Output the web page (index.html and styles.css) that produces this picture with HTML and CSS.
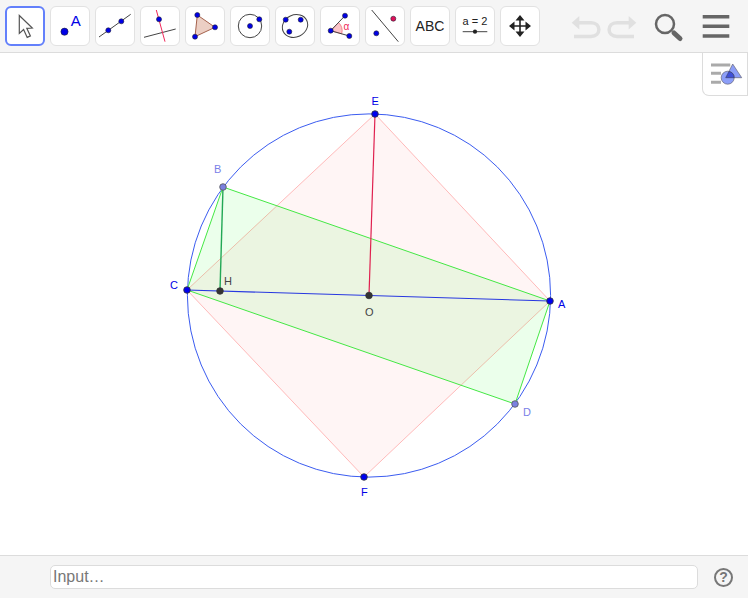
FILE: index.html
```html
<!DOCTYPE html>
<html lang="en">
<head>
  <meta charset="UTF-8" />
  <title>Circle construction</title>
  <link rel="stylesheet" href="styles.css">
</head>
<body>
  <header class="toolbar">
    <div class="tools">
      <!-- Move -->
      <button class="tool selected">
        <svg viewBox="0 0 40 40"><path class="cursor" d="M14.3 9.5 V27.5 L18.6 23.6 L22.2 31.4 L25.4 29.9 L21.8 22.3 L27.3 22 Z"/></svg>
      </button>
      <!-- Point -->
      <button class="tool">
        <svg viewBox="0 0 40 40"><circle class="dot" cx="14.5" cy="25.7" r="3.6"/><text class="icon-label blue" x="25.7" y="19.8" font-size="15">A</text></svg>
      </button>
      <!-- Line -->
      <button class="tool">
        <svg viewBox="0 0 40 40"><line class="ink" x1="4" y1="31" x2="35.7" y2="8.3"/><circle class="dot" cx="13.3" cy="24.3" r="2.5"/><circle class="dot" cx="26.3" cy="15.3" r="2.5"/></svg>
      </button>
      <!-- Perpendicular -->
      <button class="tool">
        <svg viewBox="0 0 40 40"><line class="ink" x1="4" y1="31.3" x2="35.7" y2="23"/><line class="ink red" x1="16.3" y1="4" x2="25" y2="35.7"/><circle class="dot" cx="19" cy="13.3" r="2.5"/></svg>
      </button>
      <!-- Polygon -->
      <button class="tool">
        <svg viewBox="0 0 40 40"><polygon class="poly" points="12.3,9 30,21.3 10,30.7"/><circle class="dot" cx="12.3" cy="9" r="2.5"/><circle class="dot" cx="30" cy="21.3" r="2.5"/><circle class="dot" cx="10" cy="30.7" r="2.5"/></svg>
      </button>
      <!-- Circle -->
      <button class="tool">
        <svg viewBox="0 0 40 40"><circle class="ink" cx="20" cy="20" r="11.7"/><circle class="dot" cx="20" cy="20" r="2.5"/><circle class="dot" cx="29.3" cy="13.3" r="2.5"/></svg>
      </button>
      <!-- Conic -->
      <button class="tool">
        <svg viewBox="0 0 40 40"><ellipse class="ink" cx="20" cy="20" rx="13" ry="11" transform="rotate(-25 20 20)"/><circle class="dot" cx="10.7" cy="13.7" r="2.5"/><circle class="dot" cx="25.7" cy="13.7" r="2.5"/><circle class="dot" cx="14.3" cy="25.7" r="2.5"/></svg>
      </button>
      <!-- Angle -->
      <button class="tool">
        <svg viewBox="0 0 40 40"><path class="wedge" d="M10.7 24.7 L18.5 16.5 A11.5 11.5 0 0 1 21.7 27.8 Z"/><line class="ink" x1="10.7" y1="24.7" x2="25" y2="9.7"/><line class="ink" x1="10.7" y1="24.7" x2="29.3" y2="30"/><circle class="dot" cx="10.7" cy="24.7" r="2.5"/><circle class="dot" cx="25" cy="9.7" r="2.5"/><circle class="dot" cx="29.3" cy="30" r="2.5"/><text class="icon-label red-text" x="26.3" y="23.500" font-size="10">α</text></svg>
      </button>
      <!-- Reflect -->
      <button class="tool">
        <svg viewBox="0 0 40 40"><line class="ink" x1="6.7" y1="4" x2="33.3" y2="35.7"/><circle class="dot" cx="11.3" cy="27.3" r="2.5"/><circle class="dot red-dot" cx="28.3" cy="12.7" r="2.5"/></svg>
      </button>
      <!-- Text -->
      <button class="tool">
        <svg viewBox="0 0 40 40"><text class="icon-label" x="20" y="25" font-size="14">ABC</text></svg>
      </button>
      <!-- Slider -->
      <button class="tool">
        <svg viewBox="0 0 40 40"><text class="icon-label" x="20" y="19" font-size="11">a = 2</text><line class="ink" x1="7.7" y1="25.7" x2="32.3" y2="25.7"/><circle class="knob" cx="20" cy="25.7" r="2.1"/></svg>
      </button>
      <!-- Move view -->
      <button class="tool">
        <svg viewBox="0 0 40 40"><path class="ink thick" d="M20 12 V28 M12 20 H28"/><path class="knob" d="M20 9 L24.5 14.500 H15.500 Z M20 31 L24.5 25.500 H15.500 Z M9 20 L14.500 15.500 V24.500 Z M31 20 L25.500 15.500 V24.500 Z"/></svg>
      </button>
    </div>

    <div class="actions">
      <svg class="action" viewBox="0 0 36 40"><path class="history" d="M9 16.7 H23 C33.5 16.7 33.5 30.5 23 30.5 H6"/><path class="history-head" d="M3.7 16.7 L11.3 10 V23.6 Z"/></svg>
      <svg class="action" viewBox="0 0 36 40"><path class="history" d="M27 16.7 H13 C2.5 16.7 2.5 30.5 13 30.5 H30"/><path class="history-head" d="M32.3 16.7 L24.7 10 V23.6 Z"/></svg>
      <svg class="action search" viewBox="0 0 36 40"><circle class="lens" cx="15" cy="18" r="9"/><line class="lens-handle" x1="24" y1="27" x2="30" y2="32.5"/></svg>
      <svg class="action menu" viewBox="0 0 36 40"><path class="menu-lines" d="M4.7 10.7 H31.3 M4.7 20.3 H31.3 M4.7 30 H31.3"/></svg>
    </div>
  </header>

  <main class="canvas">
    <svg class="construction" viewBox="0 0 748 502">
      <g transform="translate(0 -53)">
        <circle class="circle" cx="369" cy="295.5" r="181.6"/>
        <polygon class="square" points="187,290 375,114 550,301 364,477"/>
        <polygon class="rect" points="223,187 550,301 515,404 187,290"/>
        <line class="seg-blue" x1="187" y1="290" x2="550" y2="301"/>
        <line class="seg-red" x1="375" y1="114" x2="369" y2="295.5"/>
        <line class="seg-green" x1="223" y1="187" x2="220" y2="291"/>

        <circle class="pt free" cx="550" cy="301" r="3.300"/>
        <circle class="pt free" cx="187" cy="290" r="3.300"/>
        <circle class="pt free" cx="375" cy="114" r="3.300"/>
        <circle class="pt free" cx="364" cy="477" r="3.300"/>
        <circle class="pt soft" cx="223" cy="187" r="3.300"/>
        <circle class="pt soft" cx="515" cy="404" r="3.300"/>
        <circle class="pt dark" cx="369" cy="295.5" r="3.300"/>
        <circle class="pt dark" cx="220" cy="291" r="3.300"/>

        <text class="label blue" x="558" y="308">A</text>
        <text class="label soft-text" x="214" y="173">B</text>
        <text class="label blue" x="170" y="289">C</text>
        <text class="label soft-text" x="523" y="416">D</text>
        <text class="label blue" x="371.500" y="105">E</text>
        <text class="label blue" x="361" y="496">F</text>
        <text class="label dark-text" x="224" y="285">H</text>
        <text class="label dark-text" x="365" y="316">O</text>
      </g>
    </svg>

    <button class="style-toggle">
      <svg viewBox="0 0 46 43">
        <path class="style-lines" d="M9 12 H28.300 M9 20.300 H19 M9 29.300 H19"/>
        <polygon class="style-shape" points="30.700,11 39.700,24.700 23.700,24.700"/>
        <circle class="style-shape" cx="25.700" cy="24.700" r="6.500"/>
        <path class="style-overlap" d="M26.900 18.500 A6.500 6.500 0 0 1 32.200 24.700 H23.700 Z"/>
      </svg>
    </button>
  </main>

  <footer class="input-bar">
    <div class="input-box">Input…</div>
    <div class="help">?</div>
  </footer>
</body>
</html>
```

FILE: styles.css
```css
* {
  margin: 0;
  padding: 0;
  box-sizing: border-box;
}

html, body {
  height: 100%;
  overflow: hidden;
  background-color: #fff;
  font-family: "Liberation Sans", Arial, sans-serif;
}

body {
  display: flex;
  flex-direction: column;
  padding: 0 2px 2px 0;
}

/* Toolbar */
.toolbar {
  display: flex;
  align-items: center;
  height: 53px;
  padding: 0 14px 1px 5px;
  background-color: #f5f5f5;
  border-bottom: 1px solid #dcdcdc;
}

.tools {
  display: flex;
  gap: 5px;
}

.tool {
  width: 40px;
  height: 40px;
  background-color: #fff;
  border: 1px solid #e2e2e2;
  border-radius: 6px;
}

.tool.selected {
  border: 2px solid #6380fb;
}

.tool svg {
  display: block;
  width: 40px;
  height: 40px;
  margin: -1px;
}

.tool.selected svg {
  margin: -2px;
}

.actions {
  display: flex;
  margin-left: auto;
}

.action {
  display: block;
  width: 36px;
  height: 40px;
}

.search {
  margin-left: 10px;
}

.menu {
  margin-left: 12px;
}

.history {
  fill: none;
  stroke: #e0e0e0;
  stroke-width: 3.5;
}

.history-head {
  fill: #e0e0e0;
}

.lens {
  fill: none;
  stroke: #666;
  stroke-width: 2.5;
}

.lens-handle {
  stroke: #666;
  stroke-width: 5;
  stroke-linecap: round;
}

.menu-lines {
  fill: none;
  stroke: #666;
  stroke-width: 3.5;
}

/* Tool icons */
.cursor {
  fill: #fff;
  stroke: #555;
  stroke-width: 1.2;
}

.ink {
  fill: none;
  stroke: #444;
  stroke-width: 1;
}

.ink.red {
  stroke: #f0285a;
}

.ink.thick {
  stroke-width: 1.6;
  stroke: #222;
}

.dot {
  fill: #0000e6;
  stroke: #223;
  stroke-width: 0.6;
}

.dot.red-dot {
  fill: #e0105a;
}

.knob {
  fill: #222;
}

.poly {
  fill: #eccfc4;
  stroke: #a5624d;
  stroke-width: 1;
}

.wedge {
  fill: #fcc4c8;
  stroke: #f0707a;
  stroke-width: 0.8;
}

.icon-label {
  fill: #222;
  text-anchor: middle;
}

.icon-label.blue {
  fill: #0000e6;
}

.icon-label.red-text {
  fill: #f0285a;
}

/* Drawing area */
.canvas {
  position: relative;
  flex: 1;
}

.construction {
  display: block;
  width: 748px;
  height: 502px;
}

.circle {
  fill: none;
  stroke: #3b5cf0;
  stroke-width: 1;
}

.square {
  fill: rgba(255, 0, 0, 0.04);
  stroke: #ffa8a8;
  stroke-width: 0.8;
}

.rect {
  fill: rgba(0, 255, 0, 0.08);
  stroke: #44e844;
  stroke-width: 1;
}

.seg-blue {
  stroke: #2838e0;
  stroke-width: 1.1;
}

.seg-red {
  stroke: #e0204f;
  stroke-width: 1.2;
}

.seg-green {
  stroke: #22a855;
  stroke-width: 1.4;
}

.pt {
  stroke: #333;
  stroke-width: 0.8;
}

.pt.free {
  fill: #0000f0;
}

.pt.soft {
  fill: #7a80e0;
  stroke: #555;
}

.pt.dark {
  fill: #333;
}

.label {
  font-size: 11px;
}

.label.blue {
  fill: #0000e6;
}

.soft-text {
  fill: #7a80e8;
}

.dark-text {
  fill: #444;
}

.style-toggle {
  position: absolute;
  top: 0;
  right: 0;
  width: 46px;
  height: 43px;
  background-color: #fff;
  border: 1px solid #dcdcdc;
  border-top: none;
  border-radius: 0 0 0 7px;
}

.style-toggle svg {
  display: block;
  width: 46px;
  height: 43px;
  margin-left: -1px;
}

.style-lines {
  fill: none;
  stroke: #aaa;
  stroke-width: 3;
}

.style-shape {
  fill: #8c9ef8;
  stroke: #667;
  stroke-width: 0.7;
}

.style-overlap {
  fill: #3f50d8;
  stroke: #334;
  stroke-width: 0.5;
}

/* Input bar */
.input-bar {
  display: flex;
  align-items: center;
  height: 43px;
  padding: 0 15px 0 50px;
  background-color: #f5f5f5;
  border-top: 1px solid #dcdcdc;
}

.input-box {
  flex: 1;
  height: 24px;
  padding-left: 2px;
  background-color: #fff;
  border: 1px solid #dcdcdc;
  border-radius: 5px;
  color: #777;
  font-size: 16px;
  line-height: 21px;
}

.help {
  width: 19px;
  height: 19px;
  margin-left: 16px;
  border: 2px solid #777;
  border-radius: 50%;
  color: #777;
  font-size: 14px;
  font-weight: bold;
  line-height: 15px;
  text-align: center;
}
```
